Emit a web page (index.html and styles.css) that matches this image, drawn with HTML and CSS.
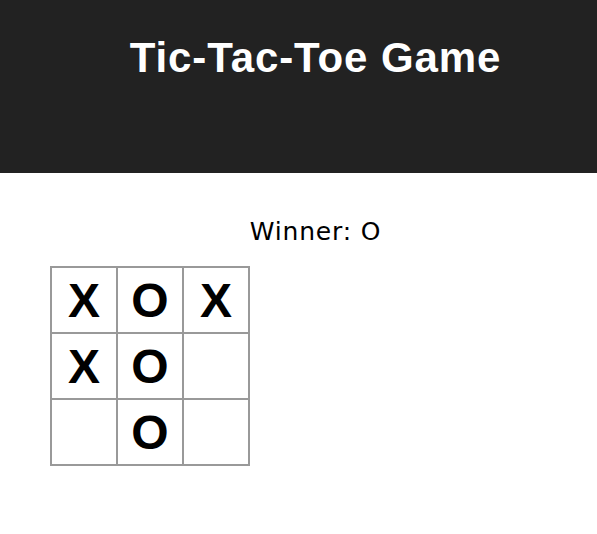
FILE: index.html
```html
<!DOCTYPE html>
<html>
<head>
<meta charset="utf-8">
<link rel="stylesheet" href="styles.css">
</head>
<body>
<header class="header">
  <h1 class="title">Tic-Tac-Toe Game</h1>
</header>
<main class="game">
  <div class="status">Winner: O</div>
  <div class="board">
    <div class="square">X</div>
    <div class="square">O</div>
    <div class="square">X</div>
    <div class="square">X</div>
    <div class="square">O</div>
    <div class="square"></div>
    <div class="square"></div>
    <div class="square">O</div>
    <div class="square"></div>
  </div>
</main>
</body>
</html>
```
FILE: styles.css
```css
html, body {
  margin: 0;
  padding: 0;
  background: #fff;
}
.header {
  background: #222222;
  height: 173px;
  box-sizing: border-box;
  padding-top: 37px;
  padding-left: 34px;
}
.title {
  margin: 0;
  text-align: center;
  color: #fff;
  font-family: "Liberation Sans", Arial, sans-serif;
  font-weight: bold;
  font-size: 42px;
  line-height: 42px;
  letter-spacing: 0.9px;
}
.game {
  padding-top: 46px;
  padding-left: 50px;
}
.status {
  text-align: center;
  margin-left: -16px;
  font-family: "DejaVu Sans", sans-serif;
  font-size: 25px;
  line-height: 25px;
  letter-spacing: 0.8px;
  color: #000;
  margin-bottom: 22px;
}
.board {
  display: grid;
  grid-template-columns: repeat(3, 64px);
  grid-template-rows: repeat(3, 64px);
  gap: 2px;
  width: 196px;
  border: 2px solid #999;
  background: #999;
}
.square {
  background: #fff;
  display: flex;
  align-items: center;
  justify-content: center;
  font-family: "Liberation Sans", Arial, sans-serif;
  font-weight: bold;
  font-size: 48px;
  color: #000;
}
```
